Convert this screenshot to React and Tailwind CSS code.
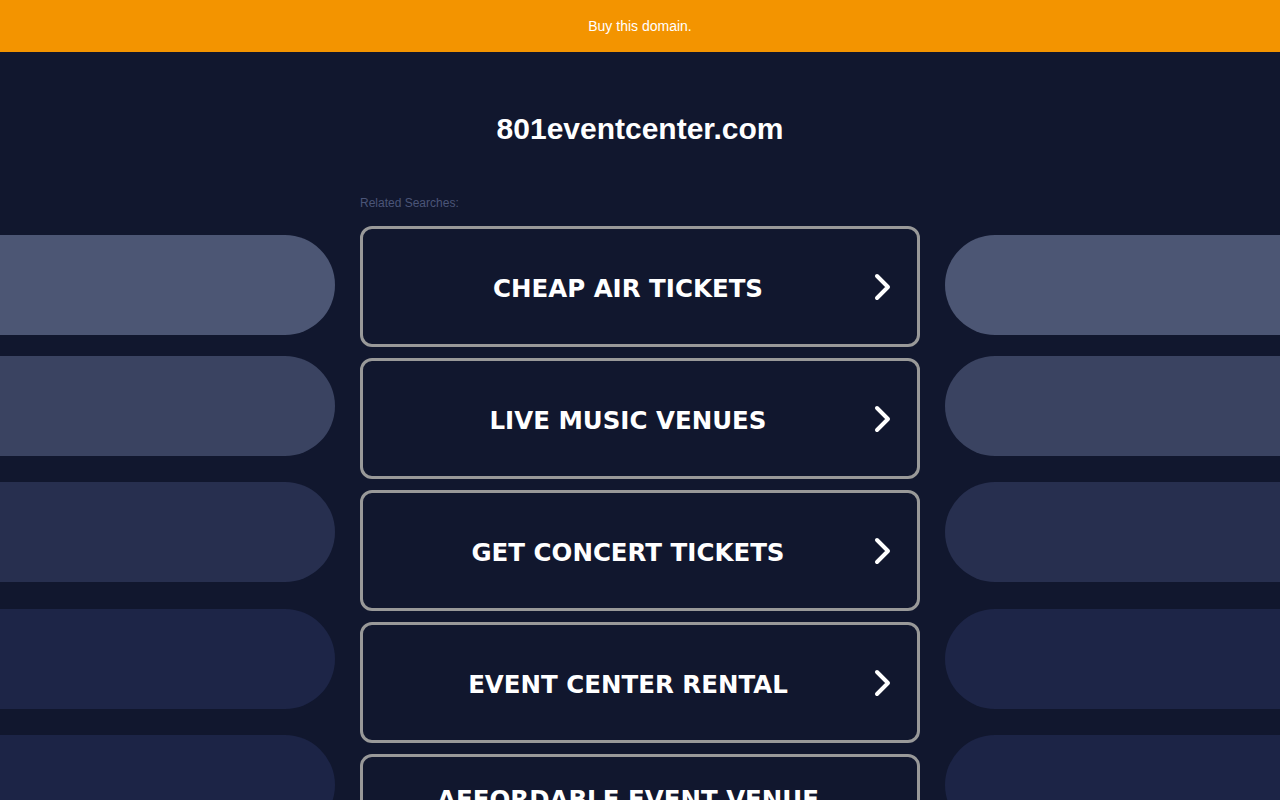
import React from "react";

const searches = [
  "CHEAP AIR TICKETS",
  "LIVE MUSIC VENUES",
  "GET CONCERT TICKETS",
  "EVENT CENTER RENTAL",
  "AFFORDABLE EVENT VENUE",
];

const pills = [
  { cls: "mt-0 bg-[#4c5674]" },
  { cls: "mt-[21px] bg-[#3a4361]" },
  { cls: "mt-[26px] bg-[#272f4f]" },
  { cls: "mt-[27px] bg-[#1d2547]" },
  { cls: "mt-[26px] bg-[#1c2446]" },
];

function Chevron() {
  return (
    <svg width="18" height="28" viewBox="0 0 18 28" className="absolute right-[25px] top-[58px] -translate-y-1/2">
      <polyline points="3,3 14,14 3,25" fill="none" stroke="#ffffff" strokeWidth="4" strokeLinecap="round" strokeLinejoin="round" />
    </svg>
  );
}

export default function App() {
  return (
    <div className="min-h-screen bg-[#11172e] font-['Liberation_Sans',Arial,sans-serif]">
      <div className="h-[52px] bg-[#f39400] flex items-center justify-center">
        <span className="text-white text-[14px] leading-[16px]">Buy this domain.</span>
      </div>
      <h1 className="mt-[59px] text-center text-white font-bold text-[30px] leading-[36px]">801eventcenter.com</h1>
      <div className="mt-[48px] flex flex-row gap-[25px] pb-10">
        <div className="w-[335px] shrink-0 pt-[40px] flex flex-col">
          {pills.map((p, i) => (
            <div key={i} className={`h-[100px] rounded-r-[50px] ${p.cls}`} />
          ))}
        </div>
        <div className="w-[560px] shrink-0 flex flex-col">
          <div className="text-[12px] leading-[16px] text-[#4b5578]">Related Searches:</div>
          <div className="mt-[15px] flex flex-col gap-[11px]">
            {searches.map((s, i) => (
              <div
                key={s}
                className={`relative border-[3px] border-[#999999] rounded-[12px] pr-[24px] ${i === searches.length - 1 ? "pt-[26px] pb-[92px]" : "pt-[43px] pb-[38px]"}`}
              >
                <div className="text-center text-white font-bold text-[24.5px] leading-[34px] font-['DejaVu_Sans',Verdana,sans-serif]">{s}</div>
                <Chevron />
              </div>
            ))}
          </div>
        </div>
        <div className="w-[335px] shrink-0 pt-[40px] flex flex-col">
          {pills.map((p, i) => (
            <div key={i} className={`h-[100px] rounded-l-[50px] ${p.cls}`} />
          ))}
        </div>
      </div>
    </div>
  );
}
